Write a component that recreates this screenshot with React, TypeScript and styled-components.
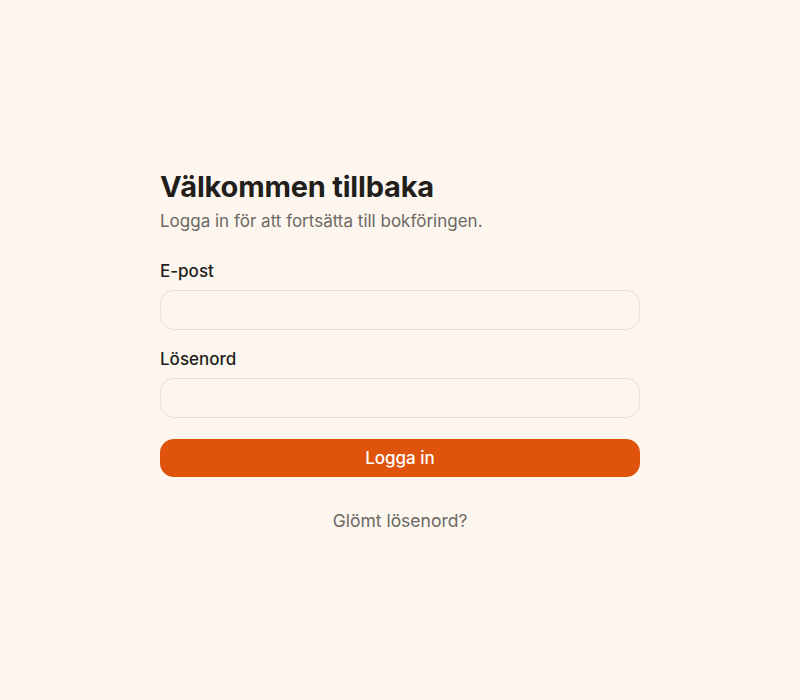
import React from "react";
import styled, { createGlobalStyle } from "styled-components";

const Global = createGlobalStyle`
  html, body { margin: 0; padding: 0; background: #fcf6ef; }
  body { font-family: Inter, "Noto Sans", sans-serif; color: #221e1b; }
  * { box-sizing: border-box; }
`;

const Page = styled.div`
  min-height: 700px;
  display: flex;
  align-items: center;
  justify-content: center;
`;

const Card = styled.div`
  width: 480px;
  display: flex;
  flex-direction: column;
`;

const Title = styled.h1`
  margin: 0;
  font-size: 29px;
  font-weight: 700;
  letter-spacing: -0.2px;
  line-height: 34px;
  color: #221e1b;
`;

const Subtitle = styled.p`
  margin: 6px 0 0;
  font-size: 17px;
  line-height: 22px;
  color: #6d6863;
`;

const Form = styled.form`
  margin-top: 28px;
  display: flex;
  flex-direction: column;
`;

const Field = styled.div`
  display: flex;
  flex-direction: column;
  gap: 8px;
  margin-bottom: 18px;
`;

const Label = styled.label`
  font-size: 17px;
  line-height: 22px;
  color: #221e1b;
  font-weight: 450;
`;

const Input = styled.input`
  height: 40px;
  border: 1px solid #e6e0d9;
  border-radius: 14px;
  background: #fcf6ef;
  padding: 0 14px;
  font: inherit;
  outline: none;
`;

const Button = styled.button`
  margin-top: 3px;
  height: 38px;
  border: none;
  border-radius: 14px;
  background: #df530c;
  color: #fff;
  font-family: inherit;
  font-size: 17px;
  font-weight: 450;
  cursor: pointer;
`;

const Forgot = styled.a`
  margin-top: 33px;
  text-align: center;
  font-size: 17.5px;
  color: #6d6863;
  text-decoration: none;
`;

export default function App() {
  return (
    <>
      <Global />
      <Page>
        <Card>
          <Title>Välkommen tillbaka</Title>
          <Subtitle>Logga in för att fortsätta till bokföringen.</Subtitle>
          <Form onSubmit={(e) => e.preventDefault()}>
            <Field>
              <Label htmlFor="email">E-post</Label>
              <Input id="email" type="email" />
            </Field>
            <Field>
              <Label htmlFor="pw">Lösenord</Label>
              <Input id="pw" type="password" />
            </Field>
            <Button type="submit">Logga in</Button>
            <Forgot href="#">Glömt lösenord?</Forgot>
          </Form>
        </Card>
      </Page>
    </>
  );
}
